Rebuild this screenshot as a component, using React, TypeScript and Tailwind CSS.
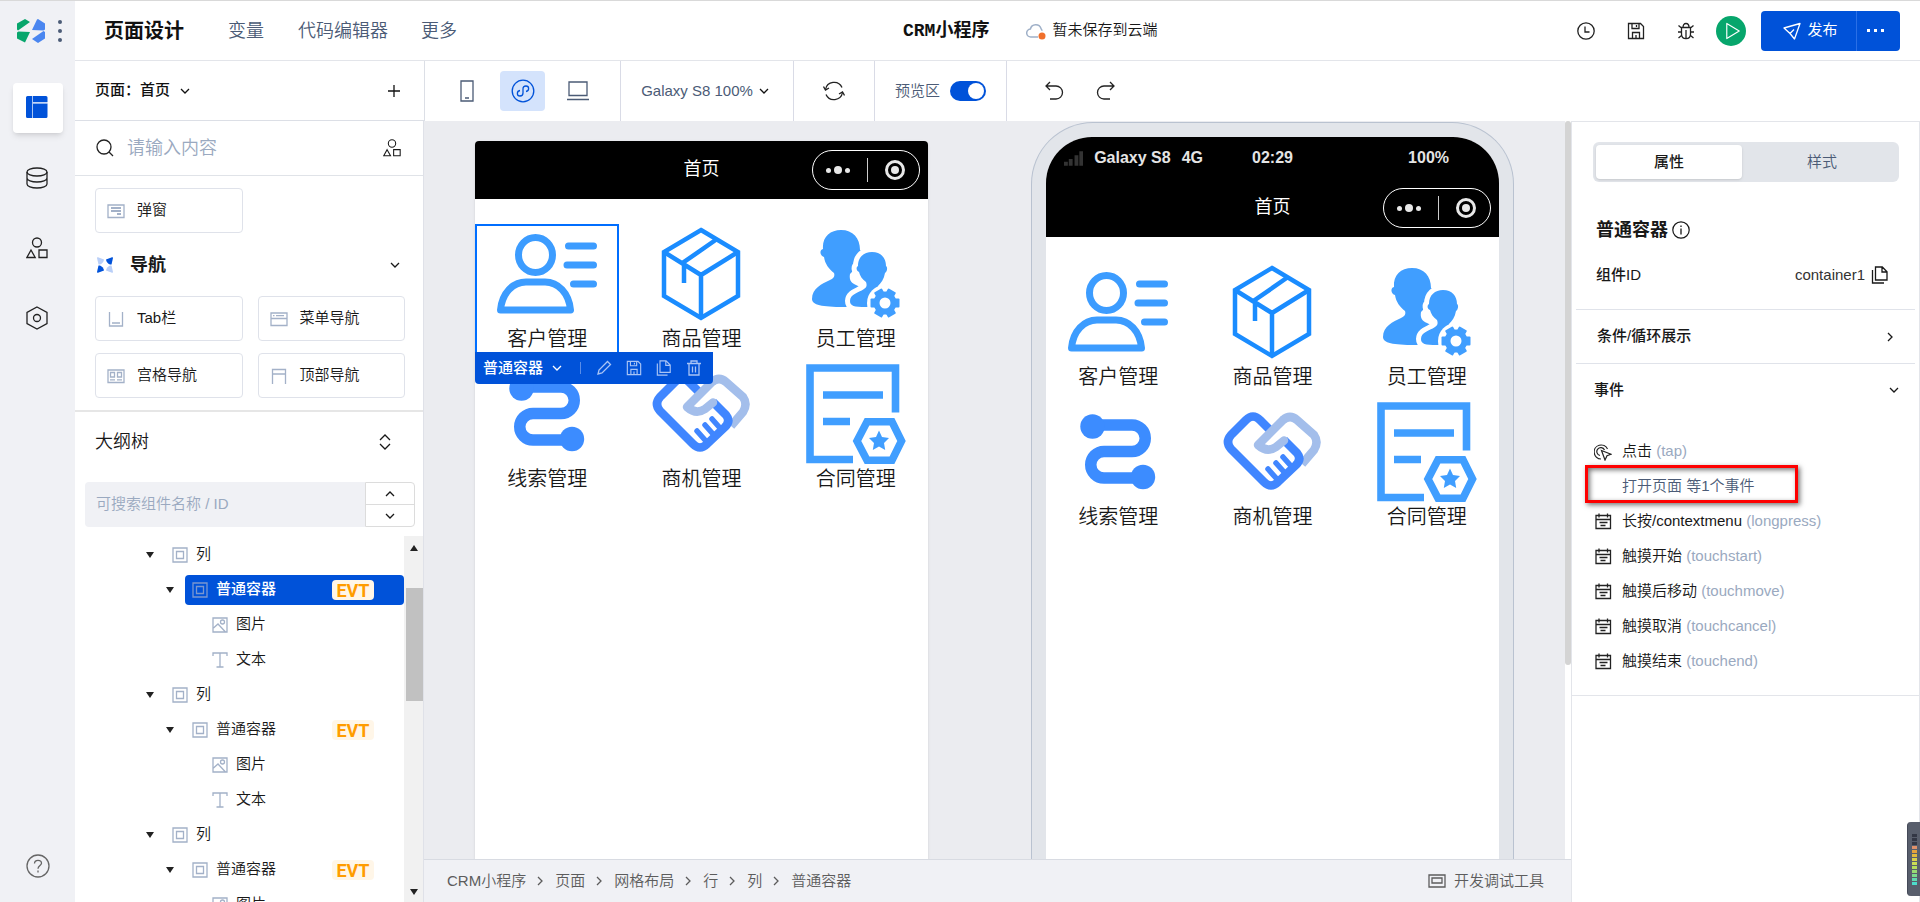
import { ReactNode, useState } from "react";
import clsx from "clsx";

type IconProps = { className?: string; children: ReactNode; box?: string };

function Svg({ className, children, box = "0 0 24 24" }: IconProps) {
  return (
    <svg
      viewBox={box}
      className={clsx("shrink-0", className)}
      fill="none"
      stroke="currentColor"
      strokeWidth={1.3}
      aria-hidden="true"
    >
      {children}
    </svg>
  );
}

const Chevron = ({ className }: { className?: string }) => (
  <Svg box="0 0 10 10" className={clsx("h-2.5 w-2.5", className)}>
    <path d="M1 3l4 4 4-4" />
  </Svg>
);

const Shapes = ({ className }: { className?: string }) => (
  <Svg box="0 0 22 22" className={className}>
    <circle cx="11" cy="5.5" r="4.5" />
    <path d="M5 13l4.2 7.5H.9z" />
    <path d="M13 13h8v7.5h-8z" />
  </Svg>
);

const CopyIcon = ({ className }: { className?: string }) => (
  <Svg box="0 0 18 18" className={className}>
    <path d="M4.5 1h6.8L16 5.7V14H4.5zM11 1v5h5M1.5 4v13H13" />
  </Svg>
);

const SaveIcon = ({ className }: { className?: string }) => (
  <Svg box="0 0 18 18" className={className}>
    <path d="M1.5 1.5h12l3 3v12h-15zM5 1.5v5h7v-5M5.5 16.500v-6h7v6M9.500 3v2M9 13v3" />
  </Svg>
);

/* ---------- sidebar ---------- */

function Sidebar() {
  return (
    <aside className="flex w-[75px] shrink-0 flex-col items-center bg-[#f0f1f5] pb-[11px] text-[#222]">
      <div className="flex h-[60px] items-center self-stretch pl-[17px]">
        <svg viewBox="0 0 28 24" className="h-6 w-7" aria-hidden="true">
          <path d="M0 4.500L8 0l5 3L1 11.500l-1-1zM0 13.500l1.500-1L13 13 8 23.500 0 19.500z" fill="#07a66c" />
          <path d="M28 19.500L21 24l-6-4L26.500 12l1.500 1zM28 4.500v6l-1.500 1L15 11l5-10.500 1-.5z" fill="#4a86f0" />
        </svg>
        <button aria-label="菜单" className="ml-[13px] flex w-1 flex-col gap-[5px]">
          <span className="h-1 w-1 rounded-full bg-[#4b5b76]" />
          <span className="h-1 w-1 rounded-full bg-[#4b5b76]" />
          <span className="h-1 w-1 rounded-full bg-[#4b5b76]" />
        </button>
      </div>
      <nav className="mt-[22px] flex flex-col gap-5">
        <button aria-label="页面" className="flex h-[50px] w-[50px] items-center justify-center rounded bg-white pr-0.5 pb-0.5 text-[#0052d9] shadow-md">
          <svg viewBox="0 0 22 22" className="h-[22px] w-[22px]" fill="currentColor">
            <path d="M1.500 0H6v22H1.500A1.500 1.500 0 0 1 0 20.500v-19A1.500 1.500 0 0 1 1.500 0zM7 7.500H21.500v13a1.500 1.500 0 0 1-1.500 1.500H7zM7 0H20a1.500 1.500 0 0 1 1.500 1.500V6H7z" />
            <path d="M6.500 0v22M7 6.800h14.500" stroke="#a8c4f3" />
          </svg>
        </button>
        <button aria-label="数据源" className="flex h-[50px] w-[50px] items-center justify-center pr-px">
          <Svg box="0 0 22 22" className="h-[22px] w-[22px]">
            <ellipse cx="11" cy="5" rx="10" ry="4" />
            <path d="M1 5v12c0 2.200 4.500 4 10 4s10-1.800 10-4V5M1 11c0 2.200 4.500 4 10 4s10-1.800 10-4" />
          </Svg>
        </button>
        <button aria-label="组件" className="flex h-[50px] w-[50px] items-center justify-center pr-px">
          <Shapes className="h-[22px] w-[22px]" />
        </button>
        <button aria-label="设置" className="flex h-[50px] w-[50px] items-center justify-center pr-px">
          <Svg box="0 0 22 24" className="h-6 w-[22px]">
            <path d="M11 1l10 5.500v11L11 23 1 17.500v-11z" />
            <circle cx="11" cy="12" r="3.500" />
          </Svg>
        </button>
      </nav>
      <button aria-label="帮助" className="mt-auto flex h-[50px] w-[50px] items-center justify-center text-[#666]">
        <Svg className="h-6 w-6">
          <circle cx="12" cy="12" r="11" />
          <path d="M8.500 9.500c0-2 1.500-3.200 3.500-3.200s3.500 1.200 3.500 3c0 2.200-3.500 2.500-3.500 5.500M12 16.500v2" />
        </Svg>
      </button>
    </aside>
  );
}

/* ---------- header ---------- */

function Header() {
  return (
    <header className="flex h-[60px] shrink-0 items-center border-b border-[#e3e5ea] pr-5 pl-[29px]">
      <nav className="flex w-[799px] items-center text-lg text-[#4b5b76]">
        <a href="#design" className="text-xl font-bold text-[#111]">页面设计</a>
        <a href="#vars" className="ml-11">变量</a>
        <a href="#code" className="ml-[34px]">代码编辑器</a>
        <a href="#more" className="ml-[33px]">更多</a>
      </nav>
      <h1 className="font-['Liberation_Mono','Noto_Sans_CJK_SC',monospace] text-lg font-bold text-[#111]">CRM小程序</h1>
      <div className="ml-[37px] flex items-center gap-1.5 text-[15px]">
        <svg viewBox="0 0 20 18" className="h-[18px] w-5" fill="none" stroke="#9fb0c8" strokeWidth="1.500" aria-hidden="true">
          <path d="M12 15H5a4 4 0 0 1-.6-8A5.500 5.500 0 0 1 15 6.500c.3 1 .4 1.500 1.500 2" />
          <circle cx="16" cy="14" r="3.500" fill="#f0702c" stroke="none" />
        </svg>
        暂未保存到云端
      </div>
      <div className="ml-auto flex items-center text-[#222]">
        <button aria-label="历史" className="flex w-[50px] justify-center">
          <Svg box="0 0 18 18" className="h-[18px] w-[18px]">
            <circle cx="9" cy="9" r="8.200" />
            <path d="M8 4.500V10h4.500" />
          </Svg>
        </button>
        <button aria-label="保存" className="flex w-[50px] justify-center">
          <SaveIcon className="h-[18px] w-[18px]" />
        </button>
        <button aria-label="调试" className="flex w-[50px] justify-center">
          <Svg box="0 0 18 18" className="h-[18px] w-[18px]">
            <path d="M6 5.500C6 3 7 1.500 9 1.500s3 1.500 3 4M4.500 5.500h9V12c0 3-2 4.700-4.500 4.700S4.500 15 4.500 12zM9 8v8.500M1.500 3.500l3 2.500M16.500 3.500l-3 2.500M1 10h3.500M13.500 10H17M1.500 16l3-2.500M16.500 16l-3-2.500" />
          </Svg>
        </button>
        <button aria-label="预览" className="ml-[5px] flex h-[30px] w-[30px] items-center justify-center rounded-full bg-[#07a66c] text-white">
          <Svg box="0 0 18 20" className="ml-1 h-[18px] w-4">
            <path d="M2 1.500v17L16 10z" strokeLinejoin="round" />
          </Svg>
        </button>
        <div className="ml-[15px] flex h-10 overflow-hidden rounded bg-[#0052d9] text-[15px] text-white">
          <button className="flex w-[95px] items-center justify-center gap-1.5 pl-1 font-normal">
            <Svg box="0 0 18 18" className="h-[18px] w-[18px]">
              <path d="M1 6l16-4.500L11.500 17 7 11.500zM7 11.500L11 7.500" strokeLinejoin="round" />
            </Svg>
            发布
          </button>
          <button aria-label="更多操作" className="flex w-11 items-center justify-center gap-1 border-l border-[#2a6fe6] pr-1.5">
            <span className="h-[3px] w-[3px] bg-white" />
            <span className="h-[3px] w-[3px] bg-white" />
            <span className="h-[3px] w-[3px] bg-white" />
          </button>
        </div>
      </div>
    </header>
  );
}

/* ---------- toolbar ---------- */

function Toolbar() {
  const [preview, setPreview] = useState(true);
  return (
    <div className="flex h-[60px] shrink-0 text-[15px] text-[#4b5b76]">
      <div className="flex w-[350px] items-center border-r border-b border-[#dcdfe6] pr-[23px] pl-5 font-medium text-[#111]">
        <span>页面：</span>
        <button className="flex items-center gap-2.5">
          首页 <Chevron />
        </button>
        <button aria-label="新建页面" className="ml-auto">
          <Svg box="0 0 14 14" className="h-3.5 w-3.5">
            <path d="M7 1v12M1 7h12" />
          </Svg>
        </button>
      </div>
      <div className="flex w-[196px] items-center border-r border-[#d9dbe6] pl-[19px]">
        <button aria-label="手机" className="flex h-10 w-[45px] items-center justify-center">
          <Svg box="0 0 14 22" className="h-[22px] w-3.5">
            <path d="M1 1h12v20H1zM5 18h4" />
          </Svg>
        </button>
        <button aria-label="小程序" className="ml-[11px] flex h-10 w-[45px] items-center justify-center rounded bg-[#d4e3fc] text-[#0052d9]">
          <Svg className="h-6 w-6">
            <circle cx="12" cy="12" r="10.800" />
            <path d="M9 11.500c-3.500.5-3.500 5.500 0 5.500 2 0 3-1.300 3-3V10c0-1.700 1-3 3-3 3.500 0 3.500 5 0 5.500" />
          </Svg>
        </button>
        <button aria-label="电脑" className="ml-2.5 flex h-10 w-[45px] items-center justify-center">
          <Svg box="0 0 22 20" className="h-5 w-[22px]">
            <path d="M2 1h18v13.500H2zM0 18.500h22" />
          </Svg>
        </button>
      </div>
      <button className="flex w-[173px] items-center justify-center gap-1.5 border-r border-[#d9dbe6] pr-1">
        Galaxy S8 100% <Chevron className="text-[#111]" />
      </button>
      <button aria-label="刷新" className="flex w-[81px] items-center justify-center border-r border-[#d9dbe6] text-[#222]">
        <Svg box="0 0 22 22" className="h-[22px] w-[22px]">
          <path d="M2.500 9.500A8.700 8.700 0 0 1 19 7.500M19.500 12.500A8.700 8.700 0 0 1 3 14.500" />
          <path d="M.5 6.500l2 3.500 3.500-2M21.500 15.500l-2-3.500-3.500 2" />
        </Svg>
      </button>
      <div className="flex w-[132px] items-center justify-center gap-2.5 border-r border-[#d9dbe6]">
        <label htmlFor="preview">预览区</label>
        <span className="relative flex h-5 w-9">
          <input
            id="preview"
            type="checkbox"
            checked={preview}
            onChange={() => setPreview(!preview)}
            className="peer h-5 w-9 appearance-none rounded-full bg-[#b5bdca] checked:bg-[#0052d9]"
          />
          <span className="pointer-events-none absolute top-0.5 left-0.5 h-4 w-4 rounded-full bg-white peer-checked:left-[18px]" />
        </span>
      </div>
      <div className="flex items-center gap-8 pl-[37px] text-[#222]">
        <button aria-label="撤销">
          <Svg box="0 0 20 20" className="h-5 w-5">
            <path d="M6 1L2 5l4 4M2 5h10a6.500 6.500 0 0 1 0 13H6" />
          </Svg>
        </button>
        <button aria-label="重做">
          <Svg box="0 0 20 20" className="h-5 w-5">
            <path d="M14 1l4 4-4 4M18 5H8a6.500 6.500 0 0 0 0 13h6" />
          </Svg>
        </button>
      </div>
    </div>
  );
}

/* ---------- left panel ---------- */

const navCards = [
  { label: "Tab栏", icon: <path d="M2.500 1v14h13V1M5 12h8" /> },
  { label: "菜单导航", icon: <path d="M1 2h16v12.500H1zM1 7.500h16M3 4.700h1.500M6 4.700h8" /> },
  { label: "宫格导航", icon: <path d="M1 2h16v12.500H1zM3.500 4.500h4v4.500h-4zM10.500 4.500h4v4.500h-4zM3 11.800h5M10 11.800h5" /> },
  { label: "顶部导航", icon: <path d="M2.500 16V1.500h13V16M2.500 6h13" /> },
];

function Card({ label, children }: { label: string; children: ReactNode }) {
  return (
    <button className="flex h-[45px] items-center gap-3 rounded border border-[#dfe2ea] px-[11px] text-[15px]">
      <Svg box="0 0 18 16" className="h-4 w-[18px] text-[#a3b1c8]">{children}</Svg>
      {label}
    </button>
  );
}

function Caret() {
  return (
    <svg viewBox="0 0 8 6" className="h-1.5 w-2" fill="#222" aria-hidden="true">
      <path d="M0 0h8L4 6z" />
    </svg>
  );
}

const ContainerIcon = (
  <>
    <path d="M1 1h14v14H1z" />
    <path d="M4.500 4.500h7v7h-7z" />
  </>
);
const ImageIcon = (
  <>
    <path d="M1 1h14v14H1zM1.500 11L6 7l7.500 8" />
    <circle cx="10.500" cy="5" r="2" />
  </>
);
const TextIcon = <path d="M1 4V1h14v3M8 1v14M4.500 15h7" />;

function Leaf({ label, icon }: { label: string; icon: ReactNode }) {
  return (
    <li className="flex h-[35px] items-center gap-2 pl-[137px]">
      <Svg box="0 0 16 16" className="h-4 w-4 text-[#a3b1c8]">{icon}</Svg>
      {label}
    </li>
  );
}

function TreeGroup({ selected }: { selected?: boolean }) {
  return (
    <>
      <li className="flex h-[35px] items-center pl-[71px]">
        <Caret />
        <Svg box="0 0 16 16" className="mr-2 ml-[18px] h-4 w-4 text-[#a3b1c8]">{ContainerIcon}</Svg>
        列
      </li>
      <li className="flex h-[35px] items-center pl-[91px]">
        <Caret />
        <button
          className={clsx(
            "ml-[11px] flex h-[30px] flex-1 items-center rounded pr-[30px] pl-[7px]",
            selected && "bg-[#0052d9] font-medium text-white"
          )}
        >
          <Svg box="0 0 16 16" className={clsx("mr-2 h-4 w-4", selected ? "text-[#7a97d0]" : "text-[#a3b1c8]")}>
            {ContainerIcon}
          </Svg>
          普通容器
          <span className="ml-auto flex h-5 w-[42px] items-center justify-center rounded bg-[#fff6e8] pt-0.5 font-['Roboto',sans-serif] text-lg font-bold text-[#ff9c00]">
            EVT
          </span>
        </button>
      </li>
      <Leaf label="图片" icon={ImageIcon} />
      <Leaf label="文本" icon={TextIcon} />
    </>
  );
}

function LeftPanel() {
  return (
    <section className="flex w-[349px] shrink-0 flex-col border-r border-[#dfe1e8]">
      <div className="flex h-[55px] shrink-0 items-center border-b border-[#e0e3e8] pr-[22px] pl-[21px]">
        <Svg box="0 0 18 18" className="mr-[13px] h-[18px] w-[18px] text-[#222]">
          <circle cx="8" cy="8" r="7" />
          <path d="M13 13l4 4" />
        </Svg>
        <input aria-label="搜索组件" placeholder="请输入内容" className="min-w-0 flex-1 text-lg outline-none placeholder:text-[#9aa9c0]" />
        <Shapes className="h-[18px] w-[18px]" />
      </div>
      <div className="h-[236px] shrink-0 overflow-hidden border-b-2 border-[#e6e6e6] px-5 pt-3 pr-[18px]">
        <div className="grid grid-cols-2 gap-x-[15px] gap-y-3">
          <Card label="弹窗">
            <path d="M1 2h16v12.500H1z" />
            <path d="M4 5h10M4 8h10M10 11h4" strokeWidth="2" />
          </Card>
        </div>
        <button className="flex h-[63px] w-full items-center text-lg font-bold">
          <svg viewBox="0 0 16 16" className="mr-[17px] ml-0.5 h-4 w-4" aria-hidden="true">
            <path d="M0 1Q0 0 1 .3L7 2.500Q6.500 6 3 7.500L1.500 7.500z" fill="#b9cff8" />
            <path d="M0 1Q0 0 1 .3L7 2.500Q6.500 6 3 7.500L1.500 7.500z" fill="#0052d9" transform="matrix(-1 0 0 1 16 0)" />
            <path d="M0 1Q0 0 1 .3L7 2.500Q6.500 6 3 7.500L1.500 7.500z" fill="#b9cff8" transform="rotate(180 8 8)" />
            <path d="M0 1Q0 0 1 .3L7 2.500Q6.500 6 3 7.500L1.500 7.500z" fill="#0052d9" transform="matrix(1 0 0 -1 0 16)" />
          </svg>
          导航
          <Chevron className="mr-[5px] ml-auto" />
        </button>
        <div className="grid grid-cols-2 gap-x-[15px] gap-y-3">
          {navCards.map((c) => (
            <Card key={c.label} label={c.label}>{c.icon}</Card>
          ))}
          <div className="h-[45px] rounded border border-[#dfe2ea]" />
          <div className="h-[45px] rounded border border-[#dfe2ea]" />
        </div>
      </div>
      <div className="mb-2.5 flex h-[60px] shrink-0 items-center justify-between pr-8 pl-5">
        <h2 className="text-lg">大纲树</h2>
        <button aria-label="收起">
          <Svg box="0 0 12 16" className="h-4 w-3">
            <path d="M1 6l5-5 5 5M1 10l5 5 5-5" />
          </Svg>
        </button>
      </div>
      <div className="flex h-[45px] shrink-0 pr-2 pl-2.5">
        <input
          aria-label="搜索大纲树"
          placeholder="可搜索组件名称 / ID"
          className="min-w-0 flex-1 rounded-l bg-[#f0f1f5] px-[11px] text-[15px] outline-none placeholder:text-[#9aa9c0]"
        />
        <div className="flex w-[50px] flex-col rounded-r border border-[#dcdcdc]">
          <button aria-label="上一个" className="flex flex-1 items-center justify-center border-b border-[#dcdcdc]">
            <Chevron className="rotate-180" />
          </button>
          <button aria-label="下一个" className="flex flex-1 items-center justify-center">
            <Chevron />
          </button>
        </div>
      </div>
      <div className="mt-[9px] flex min-h-0 flex-1 overflow-hidden">
        <ul className="min-w-0 flex-1 pt-px text-[15px]">
          <TreeGroup selected />
          <TreeGroup />
          <TreeGroup />
        </ul>
        <div className="flex w-[19px] flex-col items-center bg-[#f1f1f1] pt-[9px] pb-[7px]">
          <span className="rotate-180"><Caret /></span>
          <div className="mt-[37px] ml-0.5 h-[113px] w-[17px] bg-[#c1c1c1]" />
          <span className="mt-auto"><Caret /></span>
        </div>
      </div>
    </section>
  );
}

/* ---------- mini program screen ---------- */

const tiles = [
  {
    label: "客户管理",
    art: (
      <g stroke="#3c9cff" strokeWidth="7" strokeLinecap="round" strokeLinejoin="round">
        <ellipse cx="38.500" cy="31" rx="17" ry="17.500" />
        <path d="M3.500 86C5 69 16 58 29 58h19c13 0 24 11 25.500 28z" />
        <path d="M71.500 22h25M70 41h26.500M76.500 60h20" />
      </g>
    ),
  },
  {
    label: "商品管理",
    art: (
      <g stroke="#1a8cff" strokeWidth="4.500">
        <path d="M50 6L87 28v44L50 94 13 72V28z" />
        <path d="M13 28l37 23 37-23M50 51v42M66 15L33 38v21" />
      </g>
    ),
  },
  {
    label: "员工管理",
    art: (
      <g fill="#409eff" stroke="none">
        <path d="M35 6c12 0 19 8 19 20 3 1 2 6-1 8-1 7-5 12-9 16-1 6 1 9 6 11 8 4 16 7 17 15 0 5-7 7-29 7S6 81 6 75c0-11 10-15 18-19 4-2 5-4 4-7-5-4-9-9-10-16-4-1-5-7-1-8C16 13 24 6 35 6z" />
        <path
          d="M66 28c9 0 14 6 14 14 2 1 1 6-1 7-1 6-4 10-7 13 0 5 3 7 6 8 10 4 10 13 2 13H60c-12 0-16-1-16-6 0-7 8-8 14-12 3-2 3-4 2-7-4-3-6-6-7-10-3-1-3-5-1-6 0-9 6-14 14-14z"
          stroke="#fff"
          strokeWidth="10"
          style={{ paintOrder: "stroke" }}
        />
        <circle cx="79" cy="79" r="18" fill="#fff" />
        <circle cx="79" cy="79" r="8.500" fill="none" stroke="#409eff" strokeWidth="6" />
        {[30, 90, 150, 210, 270, 330].map((a) => (
          <rect key={a} x="74.500" y="64.500" width="9" height="6" rx="1" transform={`rotate(${a} 79 79)`} />
        ))}
      </g>
    ),
  },
  {
    label: "线索管理",
    art: (
      <g stroke="#3c8cff" strokeWidth="11.500">
        <path d="M24 23h40a13.250 13.250 0 0 1 0 26.500H36a13.250 13.250 0 0 0 0 26.500h39" />
        <circle cx="24.500" cy="24.500" r="12.200" fill="#3c8cff" stroke="none" />
        <circle cx="75" cy="75" r="12.200" fill="#3c8cff" stroke="none" />
      </g>
    ),
  },
  {
    label: "商机管理",
    art: (
      <g stroke="#4086ff" strokeWidth="8.500" strokeLinejoin="round">
        <path d="M80 62l12-14q5-8 0-15L75 18q-7-6-14 0" stroke="#a3beeb" />
        <path d="M48 28L38 18q-7-7-14 0L9 33q-6 7 0 14l33 33q7 7 14 0l18-17q6-6 1-12L62 38" />
        <path d="M62 38.500L54 45q-9 6-18-2l25-25" stroke="#a3beeb" strokeLinecap="round" />
        <path d="M46 67l8 9M54 61l8 9M61 55l8 9" strokeWidth="5.500" strokeLinecap="round" />
      </g>
    ),
  },
  {
    label: "合同管理",
    art: (
      <g stroke="#409eff" strokeWidth="7.600">
        <path d="M47 95.500H4V4h85.500v44.500M17 31h60M17 57.500h27" />
        <path d="M61 57.800h25l9.500 19.200-9.500 19.200H61L51 77z" />
        <path
          d="M73 66.500l3 6.500 7 1-5 5 1.200 7-6.200-3.400-6.200 3.400L68 79l-5-5 7-1z"
          fill="#409eff"
          stroke="none"
        />
      </g>
    ),
  },
];

function TitleBar() {
  return (
    <div className="relative flex h-[58px] shrink-0 items-center justify-center bg-black pb-0.5 text-lg font-normal text-white">
      首页
      <div className="absolute top-[9px] right-2 flex h-10 w-[108px] items-center rounded-full border border-white">
        <span className="flex w-[54px] items-center justify-center gap-[3px] pr-1">
          <i className="h-[5px] w-[5px] rounded-full bg-[#e8e8e8]" />
          <i className="h-2 w-2 rounded-full bg-[#e8e8e8]" />
          <i className="h-[5px] w-[5px] rounded-full bg-[#e8e8e8]" />
        </span>
        <span className="h-6 w-px bg-[#ccc]" />
        <span className="flex flex-1 items-center justify-center pl-0.5">
          <span className="flex h-5 w-5 items-center justify-center rounded-full border-[3px] border-[#e8e8e8]">
            <i className="h-2 w-2 rounded-full bg-[#e8e8e8]" />
          </span>
        </span>
      </div>
    </div>
  );
}

function SelectionBar() {
  return (
    <div className="absolute top-32 left-0 z-10 flex h-8 w-[238px] items-center rounded-b bg-[#0052d9] pl-2 text-[15px] font-medium text-white">
      <button className="flex items-center gap-[9px]">
        普通容器 <Chevron />
      </button>
      <span className="ml-[18px] h-3 w-px bg-[#5a8de8]" />
      <div className="ml-[15px] flex items-center gap-3.5 text-[#a9c4f5]">
        <button aria-label="编辑">
          <Svg box="0 0 16 16" className="h-4 w-4">
            <path d="M2 14l1-4 8.500-8.500 3 3L6 13z" />
          </Svg>
        </button>
        <button aria-label="保存组件"><SaveIcon className="h-4 w-4" /></button>
        <button aria-label="复制"><CopyIcon className="h-4 w-4" /></button>
        <button aria-label="删除">
          <Svg box="0 0 16 16" className="h-4 w-4">
            <path d="M1 3.500h14M5 3V1h6v2M3 4v11h10V4M6.500 6.500v6M9.500 6.500v6" />
          </Svg>
        </button>
      </div>
    </div>
  );
}

function TileGrid({ editing }: { editing?: boolean }) {
  return (
    <div className="mt-[25px] grid grid-cols-3 gap-2.5">
      {tiles.map((t, i) => (
        <div key={t.label} className="relative flex flex-col items-center text-xl leading-[30px]">
          <Svg box="0 0 100 100" className="h-[100px] w-[100px]">{t.art}</Svg>
          {t.label}
          {editing && i === 0 && (
            <>
              <div className="absolute inset-0 border-2 border-[#006eff]" />
              <SelectionBar />
            </>
          )}
        </div>
      ))}
    </div>
  );
}

const crumbs = ["CRM小程序", "页面", "网格布局", "行", "列", "普通容器"];

function Canvas() {
  return (
    <main className="flex min-w-0 flex-1 flex-col">
      <div className="flex min-h-0 flex-1">
        <div className="flex min-w-0 flex-1 justify-between overflow-hidden bg-[#ebecf0] px-[51px]">
          <div className="mt-5 w-[453px] overflow-hidden rounded-t bg-white shadow">
            <TitleBar />
            <TileGrid editing />
          </div>
          <div className="mt-px w-[483px] rounded-t-[62px] border border-b-0 border-[#b9c2d0] bg-[#e2e5ea] px-3.5 pt-3.5">
            <div className="h-full overflow-hidden rounded-t-[46px] bg-white">
              <div className="grid h-[42px] grid-cols-3 items-center bg-black px-[18px] text-base font-bold text-[#e4e4e4]">
                <span className="flex items-center gap-[11px] whitespace-nowrap">
                  <svg viewBox="0 0 20 16" className="h-4 w-5" fill="#333" aria-hidden="true">
                    <path d="M0 12h4v4H0zM5 9h4v7H5zM11 5h4v11h-4zM16 1h4v15h-4z" />
                  </svg>
                  <span>Galaxy S8</span>
                  <span>4G</span>
                </span>
                <span className="text-center">02:29</span>
                <span className="pr-8 text-right">100%</span>
              </div>
              <TitleBar />
              <TileGrid />
            </div>
          </div>
        </div>
        <div className="w-1.5 bg-white">
          <div className="h-[544px] rounded-full bg-[#d4d4d4]" />
        </div>
      </div>
      <footer className="flex h-[43px] shrink-0 items-center justify-between border-t border-[#d8dbe2] bg-[#f0f1f5] pr-[27px] pl-[23px] text-[15px] text-[#5c5c5c]">
        <nav className="flex items-center gap-[9px]">
          {crumbs.map((c, i) => (
            <span key={c} className="flex items-center gap-2.5">
              {i > 0 && <Chevron className="-rotate-90" />}
              <a href="#crumb">{c}</a>
            </span>
          ))}
        </nav>
        <button className="flex items-center gap-2">
          <Svg box="0 0 18 14" className="h-3.5 w-[18px]">
            <path d="M1 1h16v12H1zM4 4h10v5H4z" />
          </Svg>
          开发调试工具
        </button>
      </footer>
    </main>
  );
}

/* ---------- right panel ---------- */

const events = [
  { name: "长按/contextmenu", key: "longpress" },
  { name: "触摸开始", key: "touchstart" },
  { name: "触摸后移动", key: "touchmove" },
  { name: "触摸取消", key: "touchcancel" },
  { name: "触摸结束", key: "touchend" },
];

function RightPanel() {
  return (
    <aside className="w-[349px] shrink-0 border border-b-0 border-[#e3e5ea] text-[15px]">
      <div role="tablist" className="mt-5 mr-5 ml-[21px] flex h-10 rounded-md bg-[#e2e5ea] p-[3px]">
        <button role="tab" aria-selected="true" className="h-[34px] w-[146px] rounded bg-white font-medium shadow-sm">属性</button>
        <button role="tab" aria-selected="false" className="flex-1 pl-1.5 text-[#4b5b76]">样式</button>
      </div>
      <div className="mx-1 border-b border-[#e0e3ea] px-5 pt-[34px] pb-[22px]">
        <h2 className="flex h-7 items-center gap-1 text-lg font-bold">
          普通容器
          <Svg box="0 0 18 18" className="h-[18px] w-[18px]">
            <circle cx="9" cy="9" r="8.200" strokeWidth="1.200" />
            <path d="M9 7.500v6M9 4.500v1.500" />
          </Svg>
        </h2>
        <div className="mt-[19px] flex h-6 items-center">
          <span className="font-medium">组件ID</span>
          <span className="ml-auto text-[#333]">container1</span>
          <button aria-label="复制ID" className="mr-1.5 ml-1.5"><CopyIcon className="h-[18px] w-[18px]" /></button>
        </div>
      </div>
      <button className="mx-1 flex h-[54px] w-[339px] items-center justify-between border-b border-[#e0e3ea] pr-5 pl-[21px] font-medium">
        条件/循环展示 <Chevron className="-rotate-90" />
      </button>
      <button className="flex h-[52px] w-full items-center justify-between pr-5 pl-[22px] font-medium">
        事件 <Chevron />
      </button>
      <ul className="mt-[18px] border-b border-[#e3e5ea] pb-4 pl-[22px]">
        <li className="flex h-[35px] items-center gap-2.5">
          <Svg box="0 0 18 18" className="h-[18px] w-[18px] text-[#222]">
            <path d="M7 16A7 7 0 1 1 13.500 6M6 12.500a4 4 0 1 1 4.500-5.500" strokeWidth="1.200" />
            <path d="M7.500 7.500l9.500 3.700-4 1.500L11 17z" strokeWidth="1.200" fill="#fff" />
          </Svg>
          <span>点击 <span className="text-[#9aa9c0]">(tap)</span></span>
        </li>
        <li className="relative flex h-[35px] items-center pl-7 text-[#4b5b76]">
          打开页面 等1个事件
          <span className="absolute -top-1 -left-[9px] h-[38px] w-[213px] border-[3px] border-[#fe0000] shadow-[2px_2px_5px_#777,inset_2px_2px_5px_#777]" />
        </li>
        {events.map((e) => (
          <li key={e.key} className="flex h-[35px] items-center gap-2.5">
            <Svg box="0 0 18 18" className="h-[18px] w-[18px] text-[#222]">
              <path d="M2 2.500h14.500v13H2zM2 6.500h14.500M5 .5v4M13.500 .5v4M5.500 9.500h8M6.500 12.500h5" />
            </Svg>
            <span>{e.name} <span className="text-[#9aa9c0]">({e.key})</span></span>
          </li>
        ))}
      </ul>
    </aside>
  );
}

function LevelMeter() {
  const colors = ["#333745", "#333745", "#333745", "#e0916a", "#e5a13c", "#e0b93c", "#dbd04a", "#c9dc55", "#b4dd5b", "#98dc72", "#7cdc8a", "#60dcb0", "#4cdccb"];
  return (
    <div className="absolute right-0 bottom-1.5 flex h-[74px] w-[13px] flex-col items-center justify-center gap-px rounded-l border-l border-[#444958] bg-[#585e6c]">
      {colors.map((c, i) => (
        <span key={i} className="h-[3px] w-[5px]" style={{ backgroundColor: c }} />
      ))}
    </div>
  );
}

export default function App() {
  return (
    <div className="relative flex h-screen overflow-hidden border-t border-[#d9d9d9] bg-white font-['Liberation_Sans','Noto_Sans_CJK_SC',sans-serif] font-[350] text-[#181818]">
      <Sidebar />
      <div className="flex min-w-0 flex-1 flex-col">
        <Header />
        <Toolbar />
        <div className="flex min-h-0 flex-1">
          <LeftPanel />
          <Canvas />
          <RightPanel />
        </div>
      </div>
      <LevelMeter />
    </div>
  );
}
